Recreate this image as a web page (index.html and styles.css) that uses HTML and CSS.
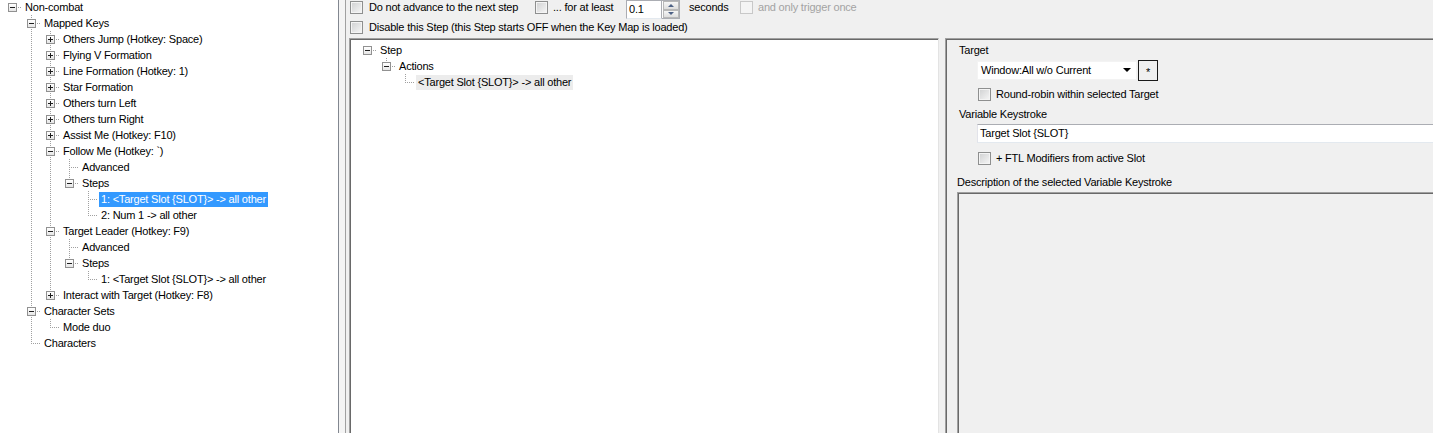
FILE: index.html
```html
<!DOCTYPE html>
<html>
<head>
<meta charset="utf-8">
<link rel="stylesheet" href="styles.css">
</head>
<body>
<div class="app">
  <div class="tree-left">
    <div class="row"><span class="c r"><span class="box minus"></span></span><span class="lbl">Non-combat</span></div>
    <div class="row"><span class="c"></span><span class="c t"><span class="box minus"></span></span><span class="lbl">Mapped Keys</span></div>
    <div class="row"><span class="c"></span><span class="c v"></span><span class="c t"><span class="box plus"></span></span><span class="lbl">Others Jump (Hotkey: Space)</span></div>
    <div class="row"><span class="c"></span><span class="c v"></span><span class="c t"><span class="box plus"></span></span><span class="lbl">Flying V Formation</span></div>
    <div class="row"><span class="c"></span><span class="c v"></span><span class="c t"><span class="box plus"></span></span><span class="lbl">Line Formation (Hotkey: 1)</span></div>
    <div class="row"><span class="c"></span><span class="c v"></span><span class="c t"><span class="box plus"></span></span><span class="lbl">Star Formation</span></div>
    <div class="row"><span class="c"></span><span class="c v"></span><span class="c t"><span class="box plus"></span></span><span class="lbl">Others turn Left</span></div>
    <div class="row"><span class="c"></span><span class="c v"></span><span class="c t"><span class="box plus"></span></span><span class="lbl">Others turn Right</span></div>
    <div class="row"><span class="c"></span><span class="c v"></span><span class="c t"><span class="box plus"></span></span><span class="lbl">Assist Me (Hotkey: F10)</span></div>
    <div class="row"><span class="c"></span><span class="c v"></span><span class="c t"><span class="box minus"></span></span><span class="lbl">Follow Me (Hotkey: `)</span></div>
    <div class="row"><span class="c"></span><span class="c v"></span><span class="c v"></span><span class="c t"></span><span class="lbl">Advanced</span></div>
    <div class="row"><span class="c"></span><span class="c v"></span><span class="c v"></span><span class="c l"><span class="box minus"></span></span><span class="lbl">Steps</span></div>
    <div class="row"><span class="c"></span><span class="c v"></span><span class="c v"></span><span class="c"></span><span class="c t"></span><span class="lbl sel">1: &lt;Target Slot {SLOT}&gt; -&gt; all other</span></div>
    <div class="row"><span class="c"></span><span class="c v"></span><span class="c v"></span><span class="c"></span><span class="c l"></span><span class="lbl">2: Num 1 -&gt; all other</span></div>
    <div class="row"><span class="c"></span><span class="c v"></span><span class="c t"><span class="box minus"></span></span><span class="lbl">Target Leader (Hotkey: F9)</span></div>
    <div class="row"><span class="c"></span><span class="c v"></span><span class="c v"></span><span class="c t"></span><span class="lbl">Advanced</span></div>
    <div class="row"><span class="c"></span><span class="c v"></span><span class="c v"></span><span class="c l"><span class="box minus"></span></span><span class="lbl">Steps</span></div>
    <div class="row"><span class="c"></span><span class="c v"></span><span class="c v"></span><span class="c"></span><span class="c l"></span><span class="lbl">1: &lt;Target Slot {SLOT}&gt; -&gt; all other</span></div>
    <div class="row"><span class="c"></span><span class="c v"></span><span class="c l"><span class="box plus"></span></span><span class="lbl">Interact with Target (Hotkey: F8)</span></div>
    <div class="row"><span class="c"></span><span class="c t"><span class="box minus"></span></span><span class="lbl">Character Sets</span></div>
    <div class="row"><span class="c"></span><span class="c v"></span><span class="c l"></span><span class="lbl">Mode duo</span></div>
    <div class="row"><span class="c"></span><span class="c l"></span><span class="lbl">Characters</span></div>
  </div>
  <div class="split"></div>
  <div class="main">
    <div class="opts">
      <div class="opt-row">
        <span class="cb"></span><span class="otext w-a">Do not advance to the next step</span>
        <span class="cb"></span><span class="otext w-b">... for at least</span>
        <div class="num"><span class="num-val">0.1</span><span class="spin"><span class="sp up"></span><span class="sp dn"></span></span></div>
        <span class="otext w-c">seconds</span>
        <span class="cb dis"></span><span class="otext dis-t">and only trigger once</span>
      </div>
      <div class="opt-row second">
        <span class="cb"></span><span class="otext">Disable this Step (this Step starts OFF when the Key Map is loaded)</span>
      </div>
    </div>
    <div class="panes">
      <div class="step-tree">
        <div class="row"><span class="c r"><span class="box minus"></span></span><span class="lbl">Step</span></div>
        <div class="row"><span class="c"></span><span class="c l"><span class="box minus"></span></span><span class="lbl">Actions</span></div>
        <div class="row"><span class="c"></span><span class="c"></span><span class="c l"></span><span class="lbl sel-grey">&lt;Target Slot {SLOT}&gt; -&gt; all other</span></div>
      </div>
      <div class="props">
        <div class="p-label">Target</div>
        <div class="combo-row">
          <div class="combo"><span>Window:All w/o Current</span><span class="arrow"></span></div>
          <div class="star">*</div>
        </div>
        <div class="cb-row"><span class="cb"></span><span class="otext">Round-robin within selected Target</span></div>
        <div class="p-label vk">Variable Keystroke</div>
        <div class="textbox">Target Slot {SLOT}</div>
        <div class="cb-row ftl"><span class="cb"></span><span class="otext">+ FTL Modifiers from active Slot</span></div>
        <div class="p-label desc-l">Description of the selected Variable Keystroke</div>
        <div class="desc"></div>
      </div>
    </div>
  </div>
</div>
</body>
</html>
```
FILE: styles.css
```css
html, body {
  margin: 0;
  padding: 0;
}
body {
  background: #f0f0f0;
  font-family: "Liberation Sans", Arial, sans-serif;
  font-size: 11px;
  letter-spacing: -0.2px;
  color: #000;
  width: 1433px;
  height: 433px;
  overflow: hidden;
}
.app {
  display: flex;
  height: 433px;
  overflow: hidden;
}
.tree-left {
  flex: none;
  width: 339px;
  box-sizing: border-box;
  background: #fff;
  border-right: 1px solid #828790;
  padding-left: 3px;
  overflow: hidden;
}
.tree-left .row:first-child {
  margin-top: -1px;
}
.row {
  display: flex;
  height: 16px;
  align-items: center;
  white-space: nowrap;
}
.c {
  flex: none;
  width: 19px;
  height: 16px;
  box-sizing: border-box;
  padding: 4px 0 0 5px;
  background-repeat: no-repeat;
}
.c.v {
  background-image: repeating-linear-gradient(to bottom, #a0a0a0 0 1px, transparent 1px 2px);
  background-size: 1px 16px;
  background-position: 9px 0;
}
.c.t {
  background-image:
    repeating-linear-gradient(to bottom, #a0a0a0 0 1px, transparent 1px 2px),
    repeating-linear-gradient(to right, #a0a0a0 0 1px, transparent 1px 2px);
  background-size: 1px 16px, 9px 1px;
  background-position: 9px 0, 11px 8px;
}
.c.l {
  background-image:
    repeating-linear-gradient(to bottom, #a0a0a0 0 1px, transparent 1px 2px),
    repeating-linear-gradient(to right, #a0a0a0 0 1px, transparent 1px 2px);
  background-size: 1px 9px, 9px 1px;
  background-position: 9px 0, 11px 8px;
}
.c.r {
  background-image: repeating-linear-gradient(to right, #a0a0a0 0 1px, transparent 1px 2px);
  background-size: 9px 1px;
  background-position: 11px 8px;
}
.box {
  display: block;
  width: 9px;
  height: 9px;
  box-sizing: border-box;
  border: 1px solid #919191;
  background-color: #fff;
  background-repeat: no-repeat;
}
.box.minus {
  background-image: linear-gradient(#1e1e1e, #1e1e1e), linear-gradient(180deg, #fff, #e6e6e6);
  background-size: 5px 1px, 100% 100%;
  background-position: 1px 3px, 0 0;
}
.box.plus {
  background-image: linear-gradient(#1e1e1e, #1e1e1e), linear-gradient(#1e1e1e, #1e1e1e), linear-gradient(180deg, #fff, #e6e6e6);
  background-size: 5px 1px, 1px 5px, 100% 100%;
  background-position: 1px 3px, 3px 1px, 0 0;
}
.lbl {
  margin-left: 1px;
  padding: 0 2px;
  line-height: 15px;
  height: 15px;
}
.lbl.sel {
  background: #3399ff;
  color: #fff;
}
.lbl.sel-grey {
  background: #ececec;
}
.split {
  width: 6px;
  flex: none;
  background: #f4f4f4;
}
.main {
  flex: 1;
  border-left: 1px solid #a0a0a0;
  display: flex;
  flex-direction: column;
  min-width: 0;
  height: 433px;
}
.opts {
  padding-left: 4px;
  height: 38px;
  flex: none;
}
.opt-row {
  display: flex;
  align-items: flex-start;
  height: 19px;
  white-space: nowrap;
}
.opt-row.second {
  padding-top: 1px;
  height: 18px;
}
.cb {
  flex: none;
  width: 13px;
  height: 13px;
  box-sizing: border-box;
  border: 1px solid #8e8f8f;
  background: linear-gradient(135deg, #cfd0d1, #f7f7f7);
  box-shadow: inset 0 0 0 1px #f4f4f4;
  margin-top: 1px;
}
.cb.dis {
  border-color: #c8c8c8;
  background: #f4f4f4;
  box-shadow: none;
}
.otext {
  margin-left: 6px;
  line-height: 15px;
}
.w-a { width: 166px; }
.w-b { width: 73px; margin-left: 5px; }
.w-c { width: 51px; margin-left: 9px; }
.dis-t { color: #a3a3a3; margin-left: 5px; }
.num {
  display: flex;
  width: 54px;
  height: 19px;
  flex: none;
}
.num-val {
  flex: 1;
  background: #fff;
  border: 1px solid #abadb3;
  border-bottom-color: #e3e9ef;
  line-height: 17px;
  padding-left: 2px;
}
.spin {
  width: 17px;
  display: flex;
  flex-direction: column;
  border: 1px solid #abadb3;
  border-left: none;
  background: #fff;
}
.sp {
  flex: 1;
  margin: 0 0 0 1px;
  border: 1px solid #b8b8b8;
  background: linear-gradient(#f6f6f6, #dedede);
  display: flex;
  align-items: center;
  justify-content: center;
}
.sp.up::before {
  content: "";
  border-left: 3px solid transparent;
  border-right: 3px solid transparent;
  border-bottom: 3px solid #4d6185;
}
.sp.dn::before {
  content: "";
  border-left: 3px solid transparent;
  border-right: 3px solid transparent;
  border-top: 3px solid #4d6185;
}
.panes {
  display: flex;
  flex: 1;
  padding-left: 3px;
  gap: 6px;
  min-height: 0;
}
.step-tree {
  width: 590px;
  flex: none;
  box-sizing: border-box;
  background: #fff;
  border: 1px solid;
  border-bottom: none;
  border-color: #a0a0a0 #e3e3e3 #e3e3e3 #a0a0a0;
  box-shadow: inset 1px 1px 0 #696969;
  padding: 3px 0 0 8px;
}
.props {
  width: 520px;
  flex: none;
  box-sizing: border-box;
  border: 1px solid;
  border-bottom: none;
  border-color: #a0a0a0 #e3e3e3 #e3e3e3 #a0a0a0;
  box-shadow: inset 1px 1px 0 #696969;
  background: #f0f0f0;
  display: flex;
  flex-direction: column;
  white-space: nowrap;
}
.p-label {
  margin: 4px 0 0 13px;
  line-height: 14px;
}
.combo-row {
  display: flex;
  margin: 3px 0 0 31px;
  align-items: flex-start;
}
.combo {
  width: 160px;
  height: 19px;
  margin-top: 1px;
  box-sizing: border-box;
  background: #fff;
  border: 1px solid #f3f3f3;
  display: flex;
  align-items: center;
  justify-content: space-between;
  padding: 0 5px 1px 3px;
}
.arrow {
  width: 0;
  height: 0;
  border-left: 4px solid transparent;
  border-right: 4px solid transparent;
  border-top: 4px solid #000;
}
.star {
  width: 20px;
  height: 21px;
  margin-left: 1px;
  box-sizing: border-box;
  border: 1px solid #1a1a1a;
  background: #f0f0f0;
  text-align: center;
  line-height: 22px;
  font-size: 11px;
}
.cb-row {
  display: flex;
  align-items: center;
  margin: 7px 0 0 32px;
  height: 13px;
}
.cb-row .cb {
  margin-top: 0;
}
.cb-row .otext {
  margin-left: 5px;
  line-height: 13px;
}
.cb-row.ftl {
  margin-top: 9px;
}
.p-label.vk {
  margin-top: 6px;
}
.textbox {
  margin: 3px 0 0 31px;
  height: 19px;
  box-sizing: border-box;
  background: #fff;
  border: 1px solid #e2e3ea;
  border-top-color: #abadb3;
  border-bottom-color: #e3e9ef;
  border-right: none;
  line-height: 17px;
  padding-left: 2px;
}
.p-label.desc-l {
  margin: 10px 0 0 11px;
}
.desc {
  margin: 3px 0 0 11px;
  flex: 1;
  border: 1px solid;
  border-bottom: none;
  border-right: none;
  border-color: #a0a0a0 #e3e3e3 #e3e3e3 #a0a0a0;
  box-shadow: inset 1px 1px 0 #696969;
  background: #f0f0f0;
}
```
